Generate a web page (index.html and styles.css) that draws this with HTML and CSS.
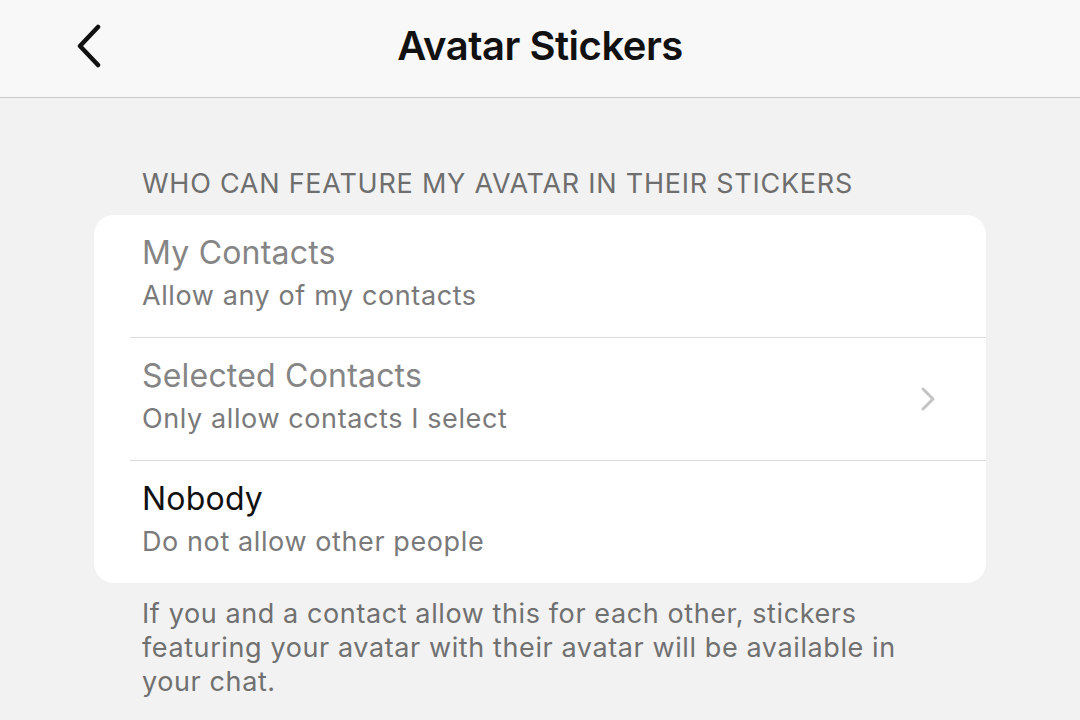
FILE: index.html
```html
<!DOCTYPE html>
<html lang="en">
<head>
  <title>Avatar Stickers</title>
  <link rel="stylesheet" href="styles.css">
</head>
<body>
  <div class="topbar">
    <button class="back" type="button" aria-label="Back">
      <svg width="30" height="44" viewBox="0 0 30 44">
        <path d="M24 3 L6 22 L24 41" fill="none" stroke="#111" stroke-width="4.5" stroke-linecap="round" stroke-linejoin="round"/>
      </svg>
    </button>
    <h1>Avatar Stickers</h1>
  </div>

  <div class="content">
    <div class="section-label">WHO CAN FEATURE MY AVATAR IN THEIR STICKERS</div>

    <div class="card">
      <div class="option">
        <div class="option-text">
          <div class="option-title">My Contacts</div>
          <div class="option-sub">Allow any of my contacts</div>
        </div>
      </div>
      <div class="option">
        <div class="option-text">
          <div class="option-title">Selected Contacts</div>
          <div class="option-sub">Only allow contacts I select</div>
        </div>
        <svg class="chevron" width="16" height="26" viewBox="0 0 16 26">
          <path d="M3 3 L13 13 L3 23" fill="none" stroke="#c4c4c4" stroke-width="3" stroke-linecap="round" stroke-linejoin="round"/>
        </svg>
      </div>
      <div class="option">
        <div class="option-text">
          <div class="option-title active">Nobody</div>
          <div class="option-sub">Do not allow other people</div>
        </div>
      </div>
    </div>

    <p class="note">If you and a contact allow this for each other, stickers<br>featuring your avatar with their avatar will be available in<br>your chat.</p>
  </div>
</body>
</html>
```

FILE: styles.css
```css
body {
  margin: 0;
  font-family: Inter, "Noto Sans", sans-serif;
  background-color: #f2f2f2;
  color: #111;
}

.topbar {
  position: relative;
  height: 97px;
  display: flex;
  align-items: center;
  justify-content: center;
  background-color: #f8f8f8;
  border-bottom: 1px solid #c9c9c9;
}

.back {
  position: absolute;
  left: 74px;
  top: 24px;
  padding: 0;
  border: none;
  background: none;
}

h1 {
  margin: 0 0 6px;
  font-size: 40px;
  font-weight: 600;
  letter-spacing: -0.5px;
  color: #111;
}

.content {
  padding: 0 94px;
}

.section-label {
  margin: 70px 0 0 48px;
  font-size: 27px;
  color: #6e6e6e;
  letter-spacing: 0.75px;
  line-height: 32px;
}

.card {
  margin-top: 15px;
  background-color: #fff;
  border-radius: 20px;
}

.option {
  display: flex;
  align-items: center;
  height: 122px;
  margin-left: 36px;
  padding: 0 50px 0 12px;
  border-bottom: 1px solid #dcdcdc;
}

.option:last-child {
  border-bottom: none;
}

.option-text {
  flex: 1;
}

.option-title {
  font-size: 32px;
  color: #858585;
  line-height: 38px;
  margin-top: -6px;
  letter-spacing: 0.2px;
}

.option-title.active {
  color: #111;
}

.option-sub {
  font-size: 27px;
  color: #7a7a7a;
  line-height: 32px;
  margin-top: 8px;
  letter-spacing: 0.6px;
}

.note {
  margin: 14px 0 0 48px;
  font-size: 27px;
  line-height: 34px;
  color: #707070;
  letter-spacing: 0.6px;
}
```
